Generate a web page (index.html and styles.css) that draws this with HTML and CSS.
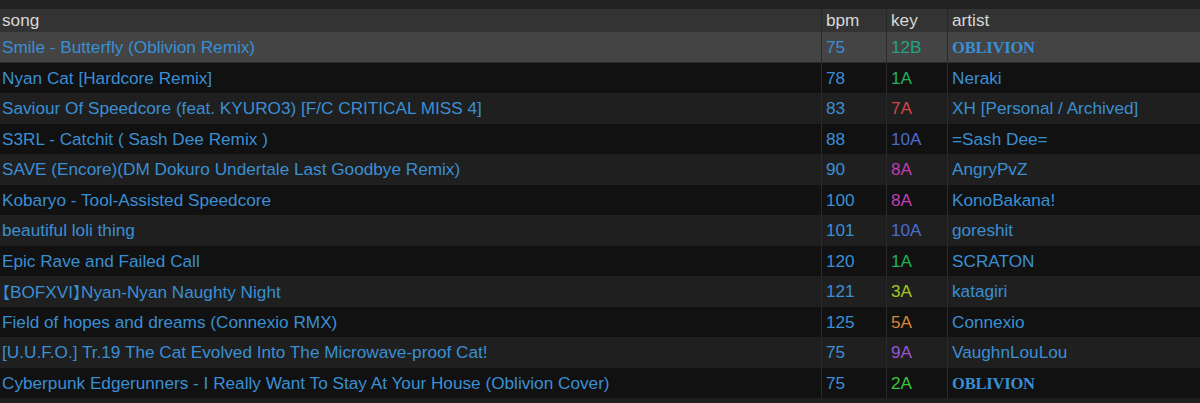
FILE: index.html
```html
<!DOCTYPE html>
<html lang="en">

<head>
    <meta charset="UTF-8">
    <meta name="viewport" content="width=device-width, initial-scale=1.0">
    <title>Songs</title>
    <link rel="stylesheet" href="styles.css">
</head>

<body>
    <div class="topbar"></div>
    <div class="table">
        <div class="row head">
            <div class="cell">song</div>
            <div class="cell">bpm</div>
            <div class="cell">key</div>
            <div class="cell">artist</div>
        </div>
        <div class="row selected">
            <div class="cell">Smile - Butterfly (Oblivion Remix)</div>
            <div class="cell">75</div>
            <div class="cell k12b">12B</div>
            <div class="cell oblivion">OBLIVION</div>
        </div>
        <div class="row dark">
            <div class="cell">Nyan Cat [Hardcore Remix]</div>
            <div class="cell">78</div>
            <div class="cell k1a">1A</div>
            <div class="cell">Neraki</div>
        </div>
        <div class="row">
            <div class="cell">Saviour Of Speedcore (feat. KYURO3) [F/C CRITICAL MISS 4]</div>
            <div class="cell">83</div>
            <div class="cell k7a">7A</div>
            <div class="cell">XH [Personal / Archived]</div>
        </div>
        <div class="row dark">
            <div class="cell">S3RL - Catchit ( Sash Dee Remix )</div>
            <div class="cell">88</div>
            <div class="cell k10a">10A</div>
            <div class="cell">=Sash Dee=</div>
        </div>
        <div class="row">
            <div class="cell">SAVE (Encore)(DM Dokuro Undertale Last Goodbye Remix)</div>
            <div class="cell">90</div>
            <div class="cell k8a">8A</div>
            <div class="cell">AngryPvZ</div>
        </div>
        <div class="row dark">
            <div class="cell">Kobaryo - Tool-Assisted Speedcore</div>
            <div class="cell">100</div>
            <div class="cell k8a">8A</div>
            <div class="cell">KonoBakana!</div>
        </div>
        <div class="row">
            <div class="cell">beautiful loli thing</div>
            <div class="cell">101</div>
            <div class="cell k10a">10A</div>
            <div class="cell">goreshit</div>
        </div>
        <div class="row dark">
            <div class="cell">Epic Rave and Failed Call</div>
            <div class="cell">120</div>
            <div class="cell k1a">1A</div>
            <div class="cell">SCRATON</div>
        </div>
        <div class="row">
            <div class="cell"><span class="cjk">【</span>BOFXVI<span class="cjk">】</span>Nyan-Nyan Naughty Night</div>
            <div class="cell">121</div>
            <div class="cell k3a">3A</div>
            <div class="cell">katagiri</div>
        </div>
        <div class="row dark">
            <div class="cell">Field of hopes and dreams (Connexio RMX)</div>
            <div class="cell">125</div>
            <div class="cell k5a">5A</div>
            <div class="cell">Connexio</div>
        </div>
        <div class="row">
            <div class="cell">[U.U.F.O.] Tr.19 The Cat Evolved Into The Microwave-proof Cat!</div>
            <div class="cell">75</div>
            <div class="cell k9a">9A</div>
            <div class="cell">VaughnLouLou</div>
        </div>
        <div class="row dark">
            <div class="cell">Cyberpunk Edgerunners - I Really Want To Stay At Your House (Oblivion Cover)</div>
            <div class="cell">75</div>
            <div class="cell k2a">2A</div>
            <div class="cell oblivion">OBLIVION</div>
        </div>
    </div>
    <div class="bottombar"></div>
</body>

</html>
```

FILE: styles.css
```css
* {
    margin: 0;
    padding: 0;
    box-sizing: border-box;
}

body {
    background-color: #1d1d1d;
    font-family: "Liberation Sans", Arial, "Noto Sans CJK SC", sans-serif;
    font-size: 17.2px;
    color: #3a8fd3;
    overflow: hidden;
}

.topbar {
    height: 9px;
    background-color: #222;
}

.bottombar {
    height: 5px;
    background-color: #1e1e1e;
}

.row {
    display: grid;
    grid-template-columns: 821px 65px 61px 1fr;
    height: 30.5px;
    background-color: #1f1f1f;
}

.row.dark {
    background-color: #111;
}

.row.head {
    height: 23px;
    background-color: #333;
    color: #d8d8d8;
}

.row.selected {
    background-color: #444;
    border-bottom: 1px solid #2b2b2b;
}

.cell {
    line-height: 30px;
    padding-left: 4px;
    white-space: nowrap;
    overflow: hidden;
    border-left: 1px solid #2a2a2a;
}

.cell:first-child {
    padding-left: 2px;
    border-left: none;
}

.head .cell {
    line-height: 22px;
    border-left-color: #262626;
}

.cjk {
    font-family: "Noto Sans CJK SC", sans-serif;
    font-feature-settings: "halt";
    font-size: 16px;
}

.oblivion {
    font-family: "Liberation Serif", "Times New Roman", serif;
    font-weight: bold;
    font-size: 16.5px;
    letter-spacing: -0.2px;
    padding-top: 1px;
}

.k12b { color: #27a083; }
.k1a { color: #20b25c; }
.k7a { color: #d04848; }
.k10a { color: #4a6ccf; }
.k8a { color: #c23db3; }
.k3a { color: #a6c81f; }
.k5a { color: #d7863a; }
.k9a { color: #9a55cf; }
.k2a { color: #3ec43c; }
```
